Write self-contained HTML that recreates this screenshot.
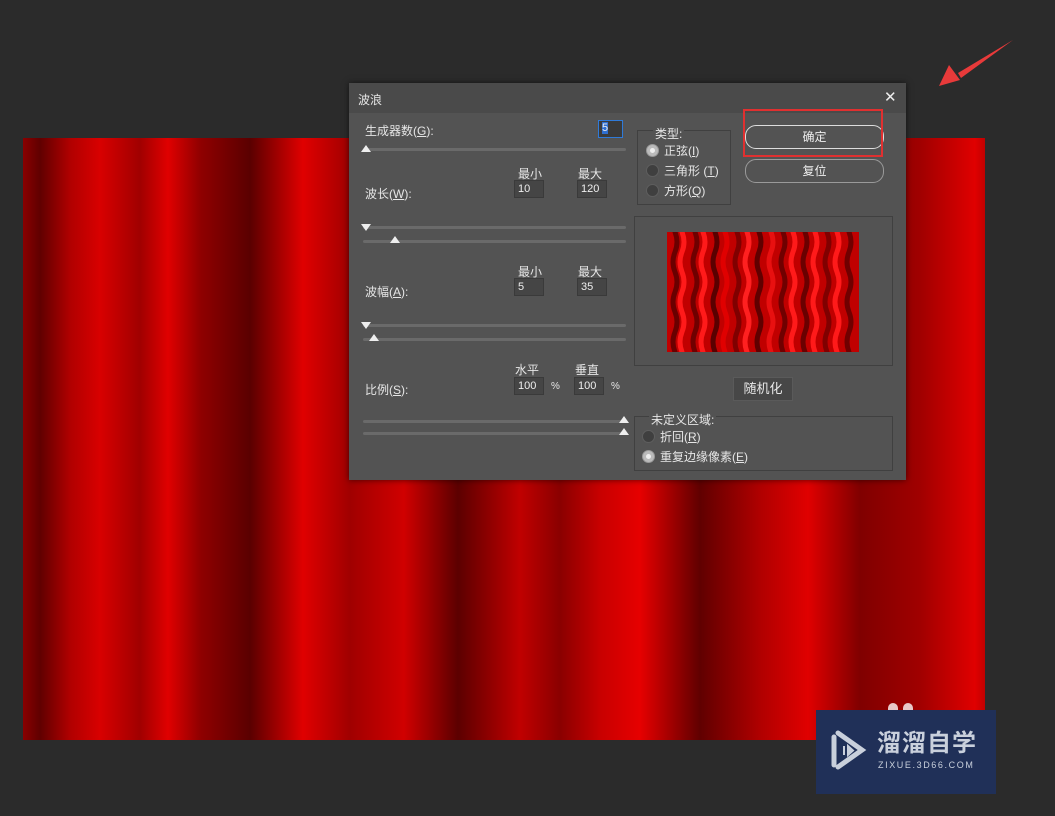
<!DOCTYPE html>
<html><head><meta charset="utf-8"><style>
body{margin:0;width:1055px;height:816px;background:#2b2b2b;position:relative;overflow:hidden;font-family:"Liberation Sans","Noto Sans CJK SC",sans-serif;color:#e8e8e8;font-size:12px}
.a{position:absolute}
.canvas{left:23px;top:138px;width:962px;height:602px;background:linear-gradient(90deg,#8a0000 0px,#600000 17px,#b00000 47px,#d80000 77px,#a00000 117px,#e00000 145px,#900000 177px,#5a0000 227px,#e00000 280px,#a00000 327px,#d00000 381px,#5c0000 435px,#c00000 497px,#8a0000 537px,#c80000 577px,#e60000 617px,#600000 677px,#b00000 737px,#e00000 785px,#800000 837px,#a00000 897px,#e00000 952px,#c00000 962px)}
.dlg{left:349px;top:83px;width:557px;height:397px;background:#535353;box-shadow:0 0 6px rgba(0,0,0,.6)}
.title{left:0;top:0;width:557px;height:30px;background:#4a4a4a}
.t{position:absolute;white-space:nowrap;font-size:12px;color:#e6e6e6}
.in{position:absolute;width:30px;height:18px;background:#454545;border:1px solid #3a3a3a;box-sizing:border-box;font-size:11px;padding:2px 3px;color:#eee}
.line{position:absolute;height:3px;background:#6a6a6a;border-radius:2px}
.up{position:absolute;width:0;height:0;border-left:5px solid transparent;border-right:5px solid transparent;border-bottom:7px solid #eee}
.dn{position:absolute;width:0;height:0;border-left:5px solid transparent;border-right:5px solid transparent;border-top:7px solid #eee}
.rad{position:absolute;width:11px;height:11px;border-radius:50%;background:#3f3f3f;border:1px solid #5e5e5e}
.rad.on{background:#bbb;border-color:#999}
.rad.on::after{content:"";position:absolute;left:3px;top:3px;width:5px;height:5px;border-radius:50%;background:#eee}
.grp{position:absolute;border:1px solid #404040;box-sizing:border-box}
.btn{position:absolute;border:1px solid #9a9a9a;border-radius:11px;box-sizing:border-box;text-align:center;color:#eee;font-size:12px}
</style></head><body>
<div class="a canvas"></div>
<svg class="a" style="left:930px;top:35px" width="90" height="60"><polygon points="83,5 28,38 31,43" fill="#e83a3a"/><polygon points="9,51 19,30 30,45" fill="#e83a3a"/></svg>
<div class="a dlg">
 <div class="a title"></div>
 <div class="t" style="left:9px;top:8px">波浪</div>
 <div class="t" style="left:535px;top:5px;font-size:15px;color:#eee">✕</div>
 <div class="t" style="left:16px;top:39px">生成器数(<u>G</u>):</div>
 <div class="in" style="left:249px;top:37px;width:25px;border-color:#2f7ad8;background:#3a3a3a;padding:1px 3px"><span style="background:#2f6fd0">5</span></div>
 <div class="line" style="left:14px;top:65px;width:263px"></div><div class="up" style="left:12px;top:62px"></div>
 <div class="t" style="left:169px;top:82px">最小</div><div class="t" style="left:229px;top:82px">最大</div>
 <div class="t" style="left:16px;top:102px">波长(<u>W</u>):</div>
 <div class="in" style="left:165px;top:97px">10</div><div class="in" style="left:228px;top:97px">120</div>
 <div class="line" style="left:14px;top:143px;width:263px"></div><div class="dn" style="left:12px;top:141px"></div>
 <div class="line" style="left:14px;top:157px;width:263px"></div><div class="up" style="left:41px;top:153px"></div>
 <div class="t" style="left:169px;top:180px">最小</div><div class="t" style="left:229px;top:180px">最大</div>
 <div class="t" style="left:16px;top:200px">波幅(<u>A</u>):</div>
 <div class="in" style="left:165px;top:195px">5</div><div class="in" style="left:228px;top:195px">35</div>
 <div class="line" style="left:14px;top:241px;width:263px"></div><div class="dn" style="left:12px;top:239px"></div>
 <div class="line" style="left:14px;top:255px;width:263px"></div><div class="up" style="left:20px;top:251px"></div>
 <div class="t" style="left:166px;top:278px">水平</div><div class="t" style="left:226px;top:278px">垂直</div>
 <div class="t" style="left:16px;top:298px">比例(<u>S</u>):</div>
 <div class="in" style="left:165px;top:294px">100</div><div class="t" style="left:202px;top:298px;font-size:10px">%</div>
 <div class="in" style="left:225px;top:294px">100</div><div class="t" style="left:262px;top:298px;font-size:10px">%</div>
 <div class="line" style="left:14px;top:337px;width:263px"></div><div class="up" style="left:270px;top:333px"></div>
 <div class="line" style="left:14px;top:349px;width:263px"></div><div class="up" style="left:270px;top:345px"></div>
 <div class="grp" style="left:288px;top:47px;width:94px;height:75px"></div>
 <div class="t" style="left:304px;top:42px;background:#535353;padding:0 2px">类型:</div>
 <div class="rad on" style="left:297px;top:61px"></div><div class="t" style="left:315px;top:59px">正弦(<u>I</u>)</div>
 <div class="rad" style="left:297px;top:81px"></div><div class="t" style="left:315px;top:79px">三角形 (<u>T</u>)</div>
 <div class="rad" style="left:297px;top:101px"></div><div class="t" style="left:315px;top:99px">方形(<u>Q</u>)</div>
 <div class="btn" style="left:396px;top:42px;width:139px;height:24px;line-height:22px;border-color:#ddd">确定</div>
 <div class="a" style="left:394px;top:26px;width:140px;height:48px;border:2px solid #e03030;box-sizing:border-box"></div>
 <div class="btn" style="left:396px;top:76px;width:139px;height:24px;line-height:22px">复位</div>
 <div class="grp" style="left:285px;top:133px;width:259px;height:150px"></div>
 <svg class="a" style="left:318px;top:149px" width="192" height="120">
  <rect width="192" height="120" fill="#c00000"/>
  <g stroke-width="5" fill="none" stroke-linecap="round">
   <path d="M8 0 q4 10 0 20 t0 20 t0 20 t0 20 t0 20 t0 20" stroke="#6a0000" transform="translate(0,0)"/>
   <path d="M8 0 q4 10 0 20 t0 20 t0 20 t0 20 t0 20 t0 20" stroke="#ff1a1a" transform="translate(7,0)"/>
   <path d="M8 0 q4 10 0 20 t0 20 t0 20 t0 20 t0 20 t0 20" stroke="#700000" transform="translate(20,0)"/>
   <path d="M8 0 q4 10 0 20 t0 20 t0 20 t0 20 t0 20 t0 20" stroke="#ff1a1a" transform="translate(28,0)"/>
   <path d="M8 0 q4 10 0 20 t0 20 t0 20 t0 20 t0 20 t0 20" stroke="#5a0000" transform="translate(40,0)"/>
   <path d="M8 0 q4 10 0 20 t0 20 t0 20 t0 20 t0 20 t0 20" stroke="#e00000" transform="translate(50,0)"/>
   <path d="M8 0 q4 10 0 20 t0 20 t0 20 t0 20 t0 20 t0 20" stroke="#800000" transform="translate(62,0)"/>
   <path d="M8 0 q4 10 0 20 t0 20 t0 20 t0 20 t0 20 t0 20" stroke="#ff2020" transform="translate(72,0)"/>
   <path d="M8 0 q4 10 0 20 t0 20 t0 20 t0 20 t0 20 t0 20" stroke="#600000" transform="translate(84,0)"/>
   <path d="M8 0 q4 10 0 20 t0 20 t0 20 t0 20 t0 20 t0 20" stroke="#e81010" transform="translate(96,0)"/>
   <path d="M8 0 q4 10 0 20 t0 20 t0 20 t0 20 t0 20 t0 20" stroke="#700000" transform="translate(108,0)"/>
   <path d="M8 0 q4 10 0 20 t0 20 t0 20 t0 20 t0 20 t0 20" stroke="#ff1a1a" transform="translate(118,0)"/>
   <path d="M8 0 q4 10 0 20 t0 20 t0 20 t0 20 t0 20 t0 20" stroke="#6a0000" transform="translate(130,0)"/>
   <path d="M8 0 q4 10 0 20 t0 20 t0 20 t0 20 t0 20 t0 20" stroke="#ff1a1a" transform="translate(140,0)"/>
   <path d="M8 0 q4 10 0 20 t0 20 t0 20 t0 20 t0 20 t0 20" stroke="#800000" transform="translate(152,0)"/>
   <path d="M8 0 q4 10 0 20 t0 20 t0 20 t0 20 t0 20 t0 20" stroke="#ff1a1a" transform="translate(162,0)"/>
   <path d="M8 0 q4 10 0 20 t0 20 t0 20 t0 20 t0 20 t0 20" stroke="#700000" transform="translate(174,0)"/>
  </g>
 </svg>
 <div class="a" style="left:384px;top:294px;width:60px;height:24px;background:#474747;border:1px solid #5a5a5a;box-sizing:border-box;text-align:center;line-height:22px;font-size:13px">随机化</div>
 <div class="grp" style="left:285px;top:333px;width:259px;height:55px"></div>
 <div class="t" style="left:300px;top:328px;background:#535353;padding:0 2px">未定义区域:</div>
 <div class="rad" style="left:293px;top:347px"></div><div class="t" style="left:311px;top:345px">折回(<u>R</u>)</div>
 <div class="rad on" style="left:293px;top:367px"></div><div class="t" style="left:311px;top:365px">重复边缘像素(<u>E</u>)</div>
</div>
<div class="a" style="left:888px;top:703px;width:10px;height:12px;border-radius:5px 5px 0 0;background:#e8c8c8"></div>
<div class="a" style="left:903px;top:703px;width:10px;height:12px;border-radius:5px 5px 0 0;background:#e8c8c8"></div>
<div class="a" style="left:816px;top:710px;width:180px;height:84px;background:#203058"></div>
<svg class="a" style="left:828px;top:727px" width="40" height="50"><path d="M10 6 L34 23 L10 40 M6 10 V38" stroke="#c9d0dc" stroke-width="5" fill="none" stroke-linecap="round"/><path d="M16 19 v9 M20 19 l5 4.5 l-5 4.5z" stroke="#c9d0dc" stroke-width="2" fill="#c9d0dc"/></svg>
<div class="t" style="left:877px;top:729px;font-size:24px;font-weight:bold;color:#c9d0dc;letter-spacing:1px;line-height:30px">溜溜自学</div>
<div class="t" style="left:878px;top:760px;font-size:9px;color:#c9d0dc;letter-spacing:1.6px;line-height:11px">ZIXUE.3D66.COM</div>
</body></html>
